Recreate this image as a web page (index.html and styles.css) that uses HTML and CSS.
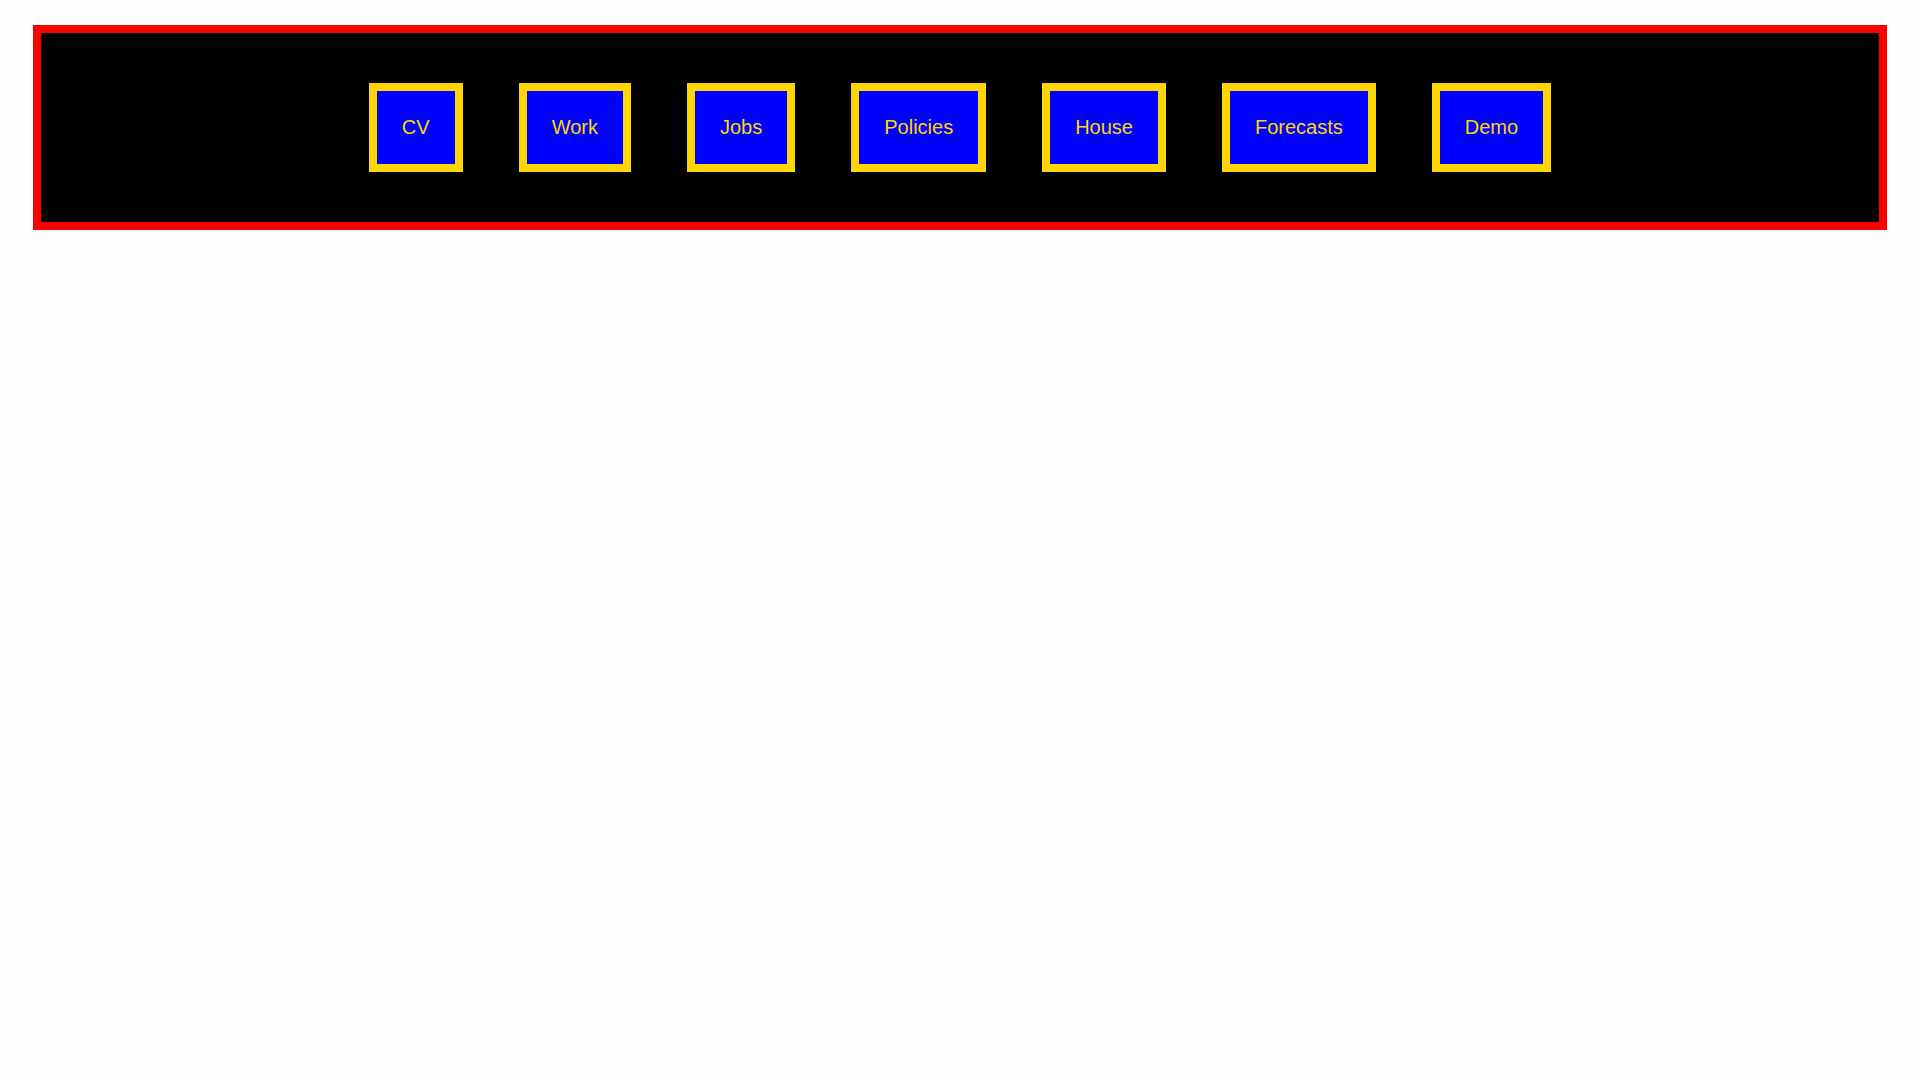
FILE: index.html
```html
<!DOCTYPE html>
<html lang="en">
<head>
<meta charset="utf-8">
<title>Menu</title>
<link rel="stylesheet" href="styles.css">
</head>
<body>
<nav class="menu">
  <a class="menu-item" href="#">CV</a>
  <a class="menu-item" href="#">Work</a>
  <a class="menu-item" href="#">Jobs</a>
  <a class="menu-item" href="#">Policies</a>
  <a class="menu-item" href="#">House</a>
  <a class="menu-item" href="#">Forecasts</a>
  <a class="menu-item" href="#">Demo</a>
</nav>
</body>
</html>
```

FILE: styles.css
```css
body {
  margin: 0;
  padding: 25px 33px;
  background: #fefefe;
  font-family: "Liberation Sans", Arial, sans-serif;
}

.menu {
  padding: 50px 0;
  background: #000;
  border: 8px solid #ff0000;
  display: flex;
  justify-content: center;
  gap: 56px;
}

.menu-item {
  display: block;
  padding: 25px;
  background: #0000ff;
  border: 8px solid #ffd700;
  color: #ffd700;
  font-size: 20px;
  line-height: 23px;
  text-decoration: none;
}
```
